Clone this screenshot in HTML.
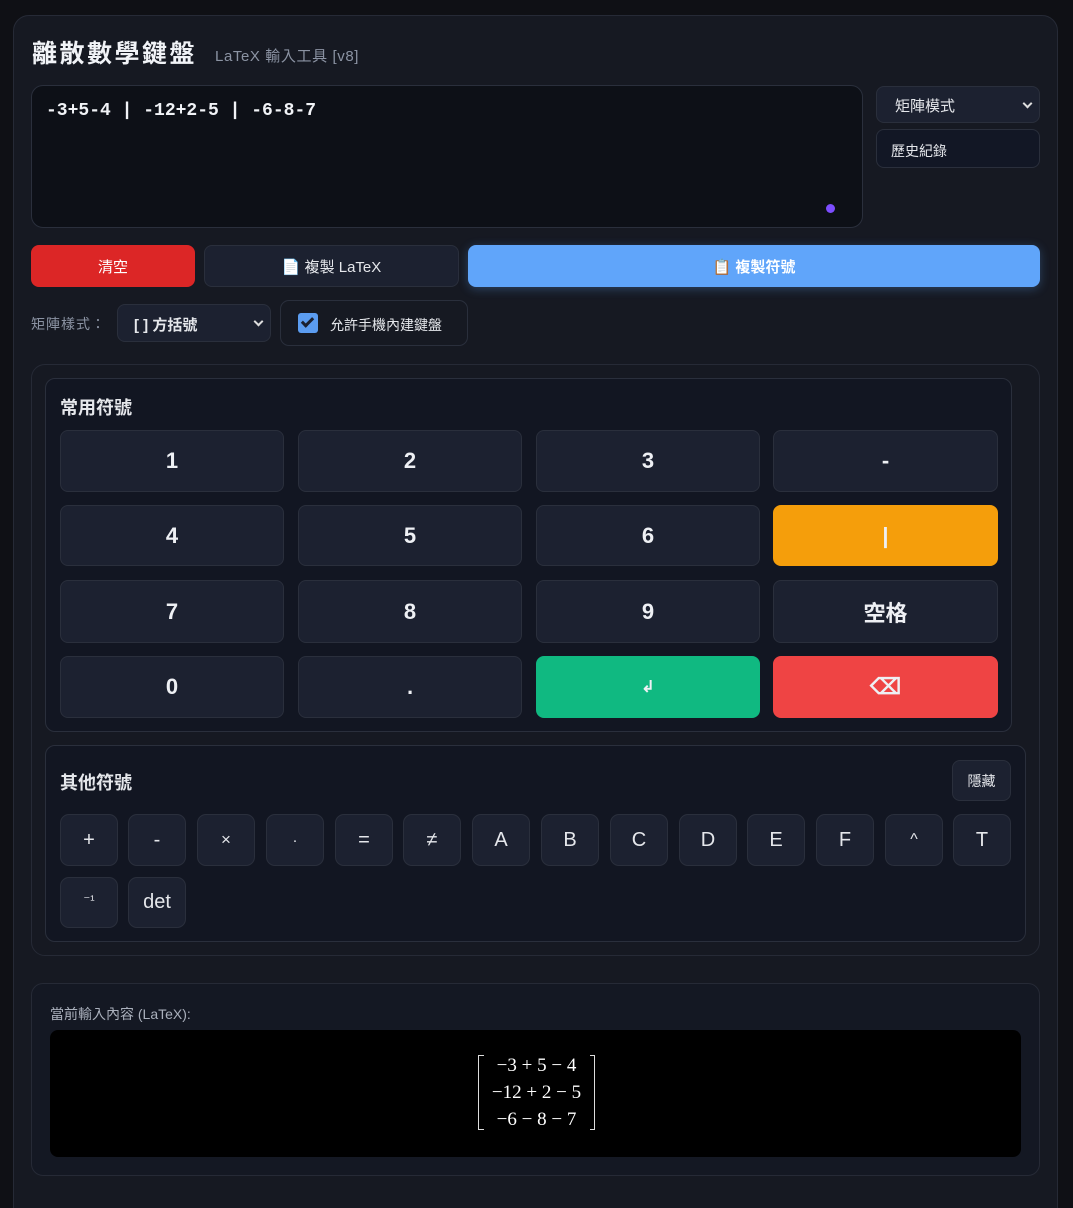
<!DOCTYPE html>
<html><head><meta charset="utf-8"><style>
*{box-sizing:border-box;margin:0;padding:0}
html,body{width:1073px;height:1208px;overflow:hidden}
body{background:#0f1015;font-family:"Liberation Sans","Noto Sans CJK TC",sans-serif;color:#e5e7eb;position:relative}
.a{position:absolute}
.card{left:13px;top:15px;width:1045px;height:1220px;background:#161922;border:1px solid #262a36;border-radius:16px}
.k{position:absolute;background:#1c2130;border:1px solid #2a2f3c;border-radius:8px;display:flex;align-items:center;justify-content:center;font-weight:bold;font-size:22px;color:#eef0f4}
.s{position:absolute;width:58px;height:52px;background:#1c2130;border:1px solid #2a2f3c;border-radius:9px;display:flex;align-items:center;justify-content:center;font-size:20px;color:#e5e7eb}
.btn{position:absolute;border-radius:8px;display:flex;align-items:center;justify-content:center;font-size:15px;color:#fff}
.chev{position:absolute;right:8px;top:13px;width:7px;height:7px;border-right:2px solid #ddd;border-bottom:2px solid #ddd;transform:rotate(45deg)}
</style></head><body>
<div class="a card"></div>
<div class="a" style="left:32px;top:34px;font-size:25px;font-weight:bold;letter-spacing:2.5px;color:#f1f3f7">離散數學鍵盤</div>
<div class="a" style="left:215px;top:45px;font-size:15px;letter-spacing:0.6px;color:#8b93a3">LaTeX 輸入工具 [v8]</div>
<div class="a" style="left:31px;top:85px;width:832px;height:143px;background:#0d1017;border:1px solid #2a2f3c;border-radius:12px"></div>
<div class="a" style="left:46px;top:101px;font-family:'Liberation Mono','DejaVu Sans Mono',monospace;font-weight:bold;font-size:18px;color:#f1f3f7">-3+5-4 | -12+2-5 | -6-8-7</div>
<div class="a" style="left:826px;top:204px;width:9px;height:9px;border-radius:50%;background:#7c4dff"></div>
<div class="a" style="left:876px;top:86px;width:164px;height:37px;background:#1c2130;border:1px solid #2a2f3c;border-radius:8px;font-size:15px;padding:8px 0 0 18px">矩陣模式<span class="chev"></span></div>
<div class="a" style="left:876px;top:129px;width:164px;height:39px;background:#121725;border:1px solid #2a2f3c;border-radius:8px;font-size:14px;padding:11px 0 0 14px">歷史紀錄</div>
<div class="btn" style="left:31px;top:245px;width:164px;height:42px;background:#dc2626">清空</div>
<div class="btn" style="left:204px;top:245px;width:255px;height:42px;background:#1c2130;border:1px solid #2a2f3c;color:#e5e7eb">📄 複製 LaTeX</div>
<div class="btn" style="left:468px;top:245px;width:572px;height:42px;background:#60a5fa;font-weight:bold;box-shadow:0 2px 10px rgba(96,165,250,.3)">📋 複製符號</div>
<div class="a" style="left:31px;top:314px;font-size:14px;letter-spacing:1px;color:#8b93a3">矩陣樣式：</div>
<div class="a" style="left:117px;top:304px;width:154px;height:38px;background:#1c2130;border:1px solid #2a2f3c;border-radius:8px;font-size:15px;font-weight:bold;padding:9px 0 0 16px">[ ] 方括號<span class="chev"></span></div>
<div class="a" style="left:280px;top:300px;width:188px;height:46px;border:1px solid #2a2f3c;border-radius:9px"></div>
<div class="a" style="left:298px;top:313px;width:20px;height:20px;background:#5b9cf0;border-radius:3px"></div>
<div class="a" style="left:304px;top:315px;width:7px;height:12px;border-right:3px solid #1a2030;border-bottom:3px solid #1a2030;transform:rotate(45deg)"></div>
<div class="a" style="left:330px;top:315px;font-size:14px">允許手機內建鍵盤</div>

<div class="a" style="left:31px;top:364px;width:1009px;height:592px;border:1px solid #262a36;border-radius:14px"></div>
<div class="a" style="left:45px;top:378px;width:967px;height:354px;background:#121622;border:1px solid #2a2f3c;border-radius:10px"></div>
<div class="a" style="left:60px;top:394px;font-size:18px;font-weight:bold">常用符號</div>
<div class="k" style="left:60px;top:430px;width:224px;height:62px">1</div>
<div class="k" style="left:298px;top:430px;width:224px;height:62px">2</div>
<div class="k" style="left:536px;top:430px;width:224px;height:62px">3</div>
<div class="k" style="left:773px;top:430px;width:225px;height:62px">-</div>
<div class="k" style="left:60px;top:505px;width:224px;height:61px">4</div>
<div class="k" style="left:298px;top:505px;width:224px;height:61px">5</div>
<div class="k" style="left:536px;top:505px;width:224px;height:61px">6</div>
<div class="k" style="left:773px;top:505px;width:225px;height:61px;background:#f59e0b;border-color:#f59e0b">|</div>
<div class="k" style="left:60px;top:580px;width:224px;height:63px">7</div>
<div class="k" style="left:298px;top:580px;width:224px;height:63px">8</div>
<div class="k" style="left:536px;top:580px;width:224px;height:63px">9</div>
<div class="k" style="left:773px;top:580px;width:225px;height:63px">空格</div>
<div class="k" style="left:60px;top:656px;width:224px;height:62px">0</div>
<div class="k" style="left:298px;top:656px;width:224px;height:62px">.</div>
<div class="k" style="left:536px;top:656px;width:224px;height:62px;background:#10b981;border-color:#10b981;font-size:16px">↲</div>
<div class="k" style="left:773px;top:656px;width:225px;height:62px;background:#ef4444;border-color:#ef4444">⌫</div>

<div class="a" style="left:45px;top:745px;width:981px;height:197px;background:#121622;border:1px solid #2a2f3c;border-radius:10px"></div>
<div class="a" style="left:60px;top:769px;font-size:18px;font-weight:bold">其他符號</div>
<div class="btn" style="left:952px;top:760px;width:59px;height:41px;background:#1c2130;border:1px solid #2a2f3c;font-size:14px;color:#e5e7eb">隱藏</div>
<div class="s" style="left:60px;top:814px">+</div>
<div class="s" style="left:128px;top:814px">-</div>
<div class="s" style="left:197px;top:814px;font-size:17px">×</div>
<div class="s" style="left:266px;top:814px;font-size:15px">·</div>
<div class="s" style="left:335px;top:814px">=</div>
<div class="s" style="left:403px;top:814px">≠</div>
<div class="s" style="left:472px;top:814px">A</div>
<div class="s" style="left:541px;top:814px">B</div>
<div class="s" style="left:610px;top:814px">C</div>
<div class="s" style="left:679px;top:814px">D</div>
<div class="s" style="left:747px;top:814px">E</div>
<div class="s" style="left:816px;top:814px">F</div>
<div class="s" style="left:885px;top:814px;font-size:16px">^</div>
<div class="s" style="left:953px;top:814px">T</div>
<div class="s" style="left:60px;top:877px;height:51px;font-size:13px;align-items:flex-start;padding-top:14px">⁻¹</div>
<div class="s" style="left:128px;top:877px;height:51px">det</div>

<div class="a" style="left:31px;top:983px;width:1009px;height:193px;border:1px solid #262a36;border-radius:12px;background:#141823"></div>
<div class="a" style="left:50px;top:1004px;font-size:14px;color:#aab0bc">當前輸入內容 (LaTeX):</div>
<div class="a" style="left:50px;top:1030px;width:971px;height:127px;background:#000;border-radius:8px"></div>
<div class="a" style="left:478px;top:1055px;width:117px;height:75px;border:1.5px solid #ddd"></div>
<div class="a" style="left:484px;top:1053px;width:106px;height:79px;background:#000"></div>
<div class="a" style="left:478px;top:1052px;width:117px;font-family:'Liberation Serif',serif;font-size:19px;color:#fff;text-align:center;line-height:27px">−3 + 5 − 4<br>−12 + 2 − 5<br>−6 − 8 − 7</div>
</body></html>
